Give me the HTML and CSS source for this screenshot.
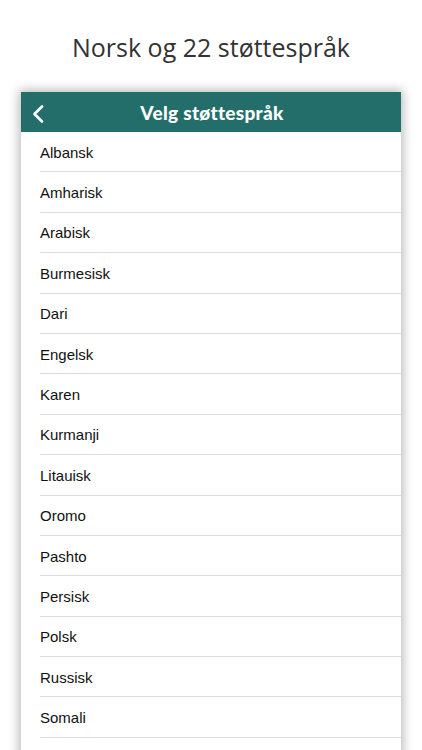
FILE: index.html
```html
<!DOCTYPE html>
<html lang="no">
<head>
  <meta charset="UTF-8">
  <meta name="viewport" content="width=device-width, initial-scale=1.0">
  <title>Velg støttespråk</title>
  <link rel="stylesheet" href="styles.css">
</head>
<body>

<h1 class="caption">Norsk og 22 støttespråk</h1>

<div class="phone">
  <div class="navbar">
    <button class="back" aria-label="Tilbake">
      <svg width="12" height="18" viewBox="0 0 12 18">
        <path d="M10 1.5 L2.5 9 L10 16.5" fill="none" stroke="#fff" stroke-width="2.6" stroke-linecap="round" stroke-linejoin="round"/>
      </svg>
    </button>
    <div class="navtitle">Velg støttespråk</div>
  </div>

  <ul class="langs">
    <li>Albansk</li>
    <li>Amharisk</li>
    <li>Arabisk</li>
    <li>Burmesisk</li>
    <li>Dari</li>
    <li>Engelsk</li>
    <li>Karen</li>
    <li>Kurmanji</li>
    <li>Litauisk</li>
    <li>Oromo</li>
    <li>Pashto</li>
    <li>Persisk</li>
    <li>Polsk</li>
    <li>Russisk</li>
    <li>Somali</li>
  </ul>
</div>

</body>
</html>
```

FILE: styles.css
```css
html, body {
  margin: 0;
  padding: 0;
  height: 100%;
  overflow: hidden;
  background: #fff;
}
.caption {
  margin: 0;
  padding-top: 31px;
  height: 61px;
  box-sizing: border-box;
  text-align: center;
  font-family: 'Open Sans', Arial, sans-serif;
  font-weight: 400;
  font-size: 25px;
  line-height: 32px;
  color: #333;
}
.phone {
  margin: 31px 0 0 21px;
  width: 380px;
  padding-bottom: 60px;
  background: #fff;
  box-shadow: 0 0 10px 2px rgba(0,0,0,0.28);
}
.navbar {
  height: 40px;
  background: #236e6b;
  display: flex;
  align-items: center;
  justify-content: center;
  position: relative;
}
.back {
  position: absolute;
  left: 11px;
  top: 13px;
  padding: 0;
  border: none;
  background: none;
  line-height: 0;
}
.navtitle {
  font-family: Lato, Arial, sans-serif;
  font-weight: 900;
  font-size: 19px;
  color: #fff;
  letter-spacing: 0.3px;
  padding-left: 2px;
}
.langs {
  list-style: none;
  margin: 0;
  padding: 0 0 0 19px;
}
.langs li {
  height: 40.4px;
  padding-top: 1px;
  box-sizing: border-box;
  border-bottom: 1px solid #dcdcdc;
  display: flex;
  align-items: center;
  font-family: 'Liberation Sans', Arial, sans-serif;
  font-size: 15px;
  color: #111;
}
```
